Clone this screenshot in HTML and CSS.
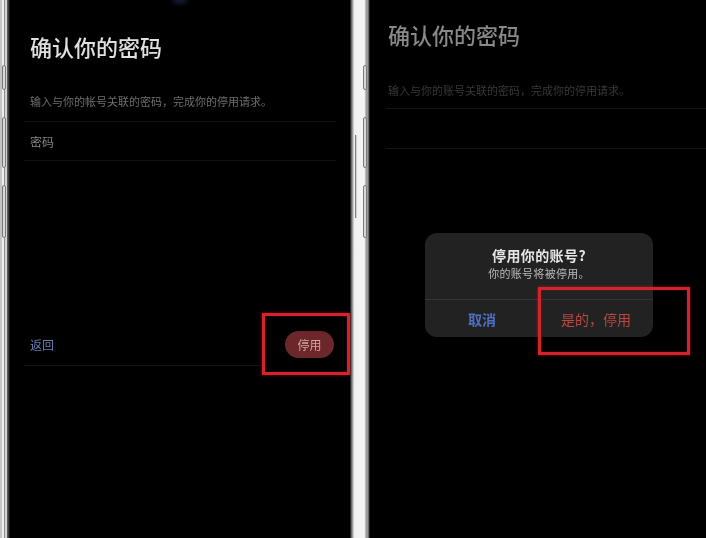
FILE: index.html
```html
<!DOCTYPE html>
<html lang="zh-CN">
<head>
<meta charset="utf-8">
<title>停用账号</title>
<link rel="stylesheet" href="styles.css">
</head>
<body>
<div class="stage">
  <div class="frame-left">
    <span class="side-btn b1"></span>
    <span class="side-btn b2"></span>
    <span class="side-btn b3"></span>
  </div>

  <div class="screen screen-left">
    <span class="island"></span>
    <h1 class="title">确认你的密码</h1>
    <p class="sub">输入与你的帐号关联的密码，完成你的停用请求。</p>
    <div class="field"><span class="placeholder">密码</span></div>
    <div class="footer">
      <span class="back">返回</span>
      <span class="pill">停用</span>
    </div>
    <div class="footer-line"></div>
    <div class="mark mark-left"></div>
  </div>

  <div class="frame-mid">
    <div class="mid-col mid-a">
      <span class="power"></span>
    </div>
    <div class="mid-col mid-b">
      <span class="side-btn b1"></span>
      <span class="side-btn b2"></span>
      <span class="side-btn b3"></span>
    </div>
  </div>

  <div class="screen screen-right">
    <h1 class="title dim">确认你的密码</h1>
    <p class="sub dim">输入与你的账号关联的密码，完成你的停用请求。</p>
    <div class="field dim-field"></div>
    <div class="dialog">
      <div class="dialog-body">
        <div class="dialog-title">停用你的账号?</div>
        <div class="dialog-msg">你的账号将被停用。</div>
      </div>
      <div class="dialog-actions">
        <span class="act cancel">取消</span>
        <span class="act confirm">是的，停用</span>
      </div>
    </div>
    <div class="mark mark-right"></div>
  </div>
</div>
</body>
</html>
```

FILE: styles.css
```css
* { box-sizing: border-box; }
html, body {
  margin: 0;
  padding: 0;
  background: #000;
}
body {
  width: 706px;
  height: 538px;
  overflow: hidden;
  font-family: "Noto Sans CJK SC", "Noto Sans", sans-serif;
}
.stage {
  display: flex;
  width: 706px;
  height: 538px;
  filter: blur(0.3px);
}

/* frames */
.frame-left {
  width: 10px;
  flex: none;
  display: flex;
  flex-direction: column;
  padding-top: 65px;
  padding-left: 2px;
  background: linear-gradient(to right,
    #c4c4c4 0, #c4c4c4 2px,
    #ececec 2px, #ececec 4px,
    #8e8e8e 4px, #8e8e8e 5px,
    #d2d2d2 5px, #d2d2d2 7px,
    #6a6a6a 7px, #2a2a2a 9px, #050505 10px);
}
.side-btn {
  display: block;
  width: 4px;
  border: 1px solid #7a7a7a;
  border-radius: 2px;
  background: #d8d8d8;
}
.b1 { height: 25px; }
.b2 { height: 51px; margin-top: 27px; }
.b3 { height: 53px; margin-top: 17px; }

.frame-mid {
  width: 20px;
  flex: none;
  display: flex;
  background: linear-gradient(to right,
    #050505 0, #4a4a4a 1px, #8c8c8c 2px, #a8a8a8 3px,
    #efefef 4px, #f6f6f6 14px, #e4e4e4 15px,
    #9a9a9a 16px, #9a9a9a 18px,
    #3a3a3a 19px, #050505 20px);
}
.mid-col {
  display: flex;
  flex-direction: column;
}
.mid-a { margin-left: 5px; width: 2px; padding-top: 135px; }
.mid-b { margin-left: 6px; width: 4px; padding-top: 65px; }
.power {
  display: block;
  width: 2px;
  height: 83px;
  border-left: 1px solid #808080;
  background: #cfcfcf;
}
.mid-b .side-btn { width: 4px; }

/* screens */
.screen {
  position: relative;
  background: #000;
  height: 538px;
}
.screen-left {
  width: 340px;
  flex: none;
  padding-top: 34px;
}
.screen-right {
  flex: 1;
  padding-top: 22px;
}
.island {
  position: absolute;
  left: 162px;
  top: -4px;
  width: 16px;
  height: 8px;
  border-radius: 50%;
  background: #141a38;
  filter: blur(2px);
}

.title {
  margin: 0;
  padding-left: 20px;
  font-size: 22px;
  line-height: 24px;
  font-weight: 500;
  color: #e0e0e0;
  letter-spacing: 0;
}
.sub {
  margin: 36px 0 0 0;
  padding-left: 20px;
  font-size: 11px;
  line-height: 14px;
  color: #6e6e6e;
}
.field {
  margin: 13px 14px 0 14px;
  height: 40px;
  border-top: 1px solid #131313;
  border-bottom: 1px solid #131313;
  display: flex;
  align-items: center;
  padding-left: 6px;
}
.placeholder {
  font-size: 12px;
  color: #858585;
}
.footer {
  margin-top: 170px;
  height: 27px;
  display: flex;
  align-items: center;
  justify-content: space-between;
  padding: 0 16px 0 20px;
}
.back {
  font-size: 12px;
  color: #6a7fb6;
}
.pill {
  width: 49px;
  height: 27px;
  border-radius: 14px;
  background: #6b2729;
  color: #d0a6a4;
  font-size: 12px;
  display: flex;
  align-items: center;
  justify-content: center;
}
.footer-line {
  margin: 7px 0 0 14px;
  width: 236px;
  height: 1px;
  background: #141414;
}

/* right screen */
.screen-right .title,
.screen-right .sub { padding-left: 18px; }
.title.dim { color: #888888; }
.sub.dim { color: #383838; margin-top: 37px; }
.dim-field {
  margin: 11px 0 0 16px;
  height: 41px;
  border-top: 1px solid #131313;
  border-bottom: 1px solid #151515;
}

.dialog {
  position: absolute;
  left: 55px;
  top: 233px;
  width: 228px;
  height: 104px;
  border-radius: 12px;
  background: #222222;
  display: flex;
  flex-direction: column;
}
.dialog-body {
  height: 67px;
  border-bottom: 1px solid #353535;
  display: flex;
  flex-direction: column;
  align-items: center;
  padding-top: 12px;
}
.dialog-title {
  font-size: 14px;
  line-height: 20px;
  font-weight: 700;
  color: #e6e6e6;
  letter-spacing: 0.4px;
}
.dialog-msg {
  margin-top: 0;
  font-size: 11px;
  line-height: 16px;
  color: #bbbbbb;
  letter-spacing: 0.3px;
}
.dialog-actions {
  flex: 1;
  display: grid;
  grid-template-columns: 1fr 1fr;
  align-items: center;
}
.act {
  text-align: center;
  font-size: 14px;
  line-height: 20px;
}
.cancel { color: #4c6fc2; font-weight: 700; }
.confirm { color: #bd4741; }

/* red annotation boxes */
.mark {
  position: absolute;
  border: 3px solid #d5232d;
  box-shadow: 0 0 3px rgba(213, 35, 45, 0.6), inset 0 0 2px rgba(213, 35, 45, 0.5);
}
.mark-left {
  left: 252px;
  top: 313px;
  width: 88px;
  height: 62px;
}
.mark-right {
  left: 168px;
  top: 287px;
  width: 152px;
  height: 68px;
}
```
